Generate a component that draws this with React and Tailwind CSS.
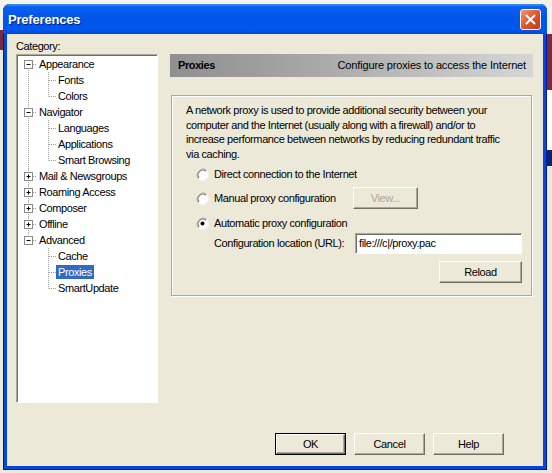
import React from "react";

const tree = [
  { t: "Appearance", lvl: 0, exp: "-", first: true },
  { t: "Fonts", lvl: 1 },
  { t: "Colors", lvl: 1, last: true },
  { t: "Navigator", lvl: 0, exp: "-" },
  { t: "Languages", lvl: 1 },
  { t: "Applications", lvl: 1 },
  { t: "Smart Browsing", lvl: 1, last: true },
  { t: "Mail & Newsgroups", lvl: 0, exp: "+" },
  { t: "Roaming Access", lvl: 0, exp: "+" },
  { t: "Composer", lvl: 0, exp: "+" },
  { t: "Offline", lvl: 0, exp: "+" },
  { t: "Advanced", lvl: 0, exp: "-", lastTop: true },
  { t: "Cache", lvl: 1, under: true },
  { t: "Proxies", lvl: 1, under: true, sel: true },
  { t: "SmartUpdate", lvl: 1, under: true, last: true },
];

const dot = { stroke: "#a0a0a0", strokeWidth: 1, strokeDasharray: "1 1" };

function Gutter({ item }) {
  if (item.lvl === 0) {
    return (
      <svg width="19" height="16" className="shrink-0">
        <line x1="10.5" y1={item.first ? 8 : 0} x2="10.5" y2={item.lastTop ? 8 : 16} {...dot} />
        <line x1="15" y1="8.5" x2="19" y2="8.5" {...dot} />
        <rect x="6.5" y="4.5" width="8" height="8" fill="#fff" stroke="#8a8a8a" />
        <line x1="8.5" y1="8.5" x2="12.5" y2="8.5" stroke="#000" />
        {item.exp === "+" && <line x1="10.5" y1="6.5" x2="10.5" y2="10.5" stroke="#000" />}
      </svg>
    );
  }
  return (
    <svg width="38" height="16" className="shrink-0">
      {!item.under && <line x1="10.5" y1="0" x2="10.5" y2="16" {...dot} />}
      <line x1="30.5" y1="0" x2="30.5" y2={item.last ? 8.5 : 16} {...dot} />
      <line x1="31" y1="8.5" x2="38" y2="8.5" {...dot} />
    </svg>
  );
}

function Radio({ checked }) {
  return (
    <svg width="13" height="13" className="shrink-0">
      <circle cx="6.5" cy="6.5" r="6" fill="#fff" stroke="#f4f3ee" />
      <path d="M2.3 10.7 A6 6 0 0 1 10.7 2.3" fill="none" stroke="#aca899" strokeWidth="1" />
      <path d="M3 10 A5 5 0 0 1 10 3" fill="none" stroke="#716f64" strokeWidth="1" />
      {checked && <circle cx="6.5" cy="6.5" r="2" fill="#000" />}
    </svg>
  );
}

function Btn({ children, w, def, disabled }) {
  return (
    <div
      className={`flex h-[22px] items-center justify-center bg-[#ece9d8] ${
        def ? "border border-black" : ""
      }`}
      style={{ width: w }}
    >
      <div className="flex h-full w-full items-center justify-center border-t border-l border-t-white border-l-white border-r border-b border-r-[#716f64] border-b-[#716f64] shadow-[inset_-1px_-1px_0_#aca899]">
        <span className={disabled ? "text-[#aca899]" : "text-black"}>{children}</span>
      </div>
    </div>
  );
}

export default function App() {
  return (
    <div
      className="flex h-[473px] w-[552px] overflow-hidden bg-[#ece9d8] text-[11px] tracking-[-0.4px] text-black"
      style={{ fontFamily: '"Liberation Sans", Arial, sans-serif' }}
    >
      <div className="flex w-[3px] flex-col">
        <div className="h-[30px] bg-[#f2f1ea]" />
        <div className="h-[20px] bg-[#7b2a3c]" />
        <div className="flex-1 bg-[#ece9d8]" />
      </div>
      <div className="flex flex-col">
        <div className="h-[4px] w-[544px] bg-[#f4f3ee]" />
        {/* window */}
        <div className="flex h-[466px] w-[544px] flex-col overflow-hidden rounded-t-[7px] bg-[#0846d8] shadow-[inset_0_0_0_1px_#0019a0]">
          {/* title bar */}
          <div className="flex h-[30px] shrink-0 items-center justify-between bg-[linear-gradient(#3d95ff_0%,#0a5ef0_10%,#0054e8_50%,#0058ee_85%,#0048d8_100%)] pl-[5px] pr-[6px]">
            <span className="mt-[2px] text-[13px] font-bold tracking-[-0.2px] text-white [text-shadow:1px_1px_0_#0a1e80]">
              Preferences
            </span>
            <div className="flex h-[21px] w-[21px] items-center justify-center rounded-[3px] border border-white bg-[linear-gradient(135deg,#f09a7c,#e0562b_50%,#c13d12)]">
              <svg width="11" height="11" viewBox="0 0 11 11">
                <path d="M1.5 1.5 L9.5 9.5 M9.5 1.5 L1.5 9.5" stroke="#fff" strokeWidth="2" strokeLinecap="round" />
              </svg>
            </div>
          </div>
          {/* client */}
          <div className="mx-[4px] mb-[4px] flex flex-1 flex-col bg-[#ece9d8]">
            <div className="flex pl-[9px] pt-[5px]">
              <div className="flex w-[142px] flex-col">
                <div className="h-[15px] leading-[14px]">Category:</div>
                <div className="h-[349px] border-t border-l border-t-[#aca899] border-l-[#aca899] border-r border-b border-r-white border-b-white bg-white shadow-[inset_1px_1px_0_#716f64]">
                  <div className="flex flex-col pl-px pt-px">
                    {tree.map((it) => (
                      <div key={it.t} className="flex h-[16px] items-center">
                        <Gutter item={it} />
                        <span
                          className={`whitespace-nowrap px-[2px] leading-[14px] ${
                            it.sel ? "bg-[#316ac5] text-white" : ""
                          }`}
                        >
                          {it.t}
                        </span>
                      </div>
                    ))}
                  </div>
                </div>
              </div>
              <div className="ml-[12px] mt-[15px] flex w-[363px] flex-col">
                <div className="flex h-[23px] items-center justify-between bg-[linear-gradient(90deg,#8f8f8f,#a8a8a8_40%,#d6d6d6)] pl-[8px] pr-[7px]">
                  <span className="font-bold">Proxies</span>
                  <span className="tracking-[-0.15px]">Configure proxies to access the Internet</span>
                </div>
                <div className="mx-px mt-[18px] flex h-[201px] flex-col border border-[#aca899] shadow-[inset_1px_1px_0_#fff,1px_1px_0_#fff]">
                  <p className="whitespace-nowrap pl-[14px] pt-[7px] leading-[14.5px]">
                    A network proxy is used to provide additional security between your
                    <br />
                    computer and the Internet (usually along with a firewall) and/or to
                    <br />
                    increase performance between networks by reducing redundant traffic
                    <br />
                    via caching.
                  </p>
                  <div className="ml-[24px] mt-[5px] flex h-[16px] items-center">
                    <Radio />
                    <span className="ml-[5px] whitespace-nowrap">Direct connection to the Internet</span>
                  </div>
                  <div className="ml-[24px] mt-[5px] flex h-[23px] items-center">
                    <Radio />
                    <span className="ml-[5px] w-[139px] whitespace-nowrap">Manual proxy configuration</span>
                    <div className="h-[23px]">
                      <Btn w={65} disabled>
                        <span className="flex h-[21px] items-center">View...</span>
                      </Btn>
                    </div>
                  </div>
                  <div className="ml-[24px] mt-[5px] flex h-[16px] items-center">
                    <Radio checked />
                    <span className="ml-[5px] whitespace-nowrap">Automatic proxy configuration</span>
                  </div>
                  <div className="ml-[42px] mt-[2px] flex h-[21px] items-center">
                    <span className="w-[141px] shrink-0 whitespace-nowrap">Configuration location (URL):</span>
                    <div className="flex h-[21px] w-[167px] items-center border-t border-l border-t-[#aca899] border-l-[#aca899] border-r border-b border-r-white border-b-white bg-white pl-[3px] shadow-[inset_1px_1px_0_#716f64]">
                      file:///c|/proxy.pac
                    </div>
                  </div>
                  <div className="mr-[9px] mt-[7px] flex justify-end">
                    <Btn w={83}>Reload</Btn>
                  </div>
                </div>
              </div>
            </div>
            <div className="mt-auto flex justify-end gap-[8px] pb-[11px] pr-[39px]">
              <Btn w={71} def>
                OK
              </Btn>
              <Btn w={71}>Cancel</Btn>
              <Btn w={71}>Help</Btn>
            </div>
          </div>
        </div>
      </div>
      <div className="flex w-[5px] flex-col">
        <div className="h-[34px] bg-[#f2f1ea]" />
        <div className="h-[56px] bg-[#7b2a3c]" />
        <div className="h-[60px] bg-white" />
        <div className="h-[16px] bg-[#0a246a]" />
        <div className="flex-1 bg-[#ece9d8]" />
      </div>
    </div>
  );
}
